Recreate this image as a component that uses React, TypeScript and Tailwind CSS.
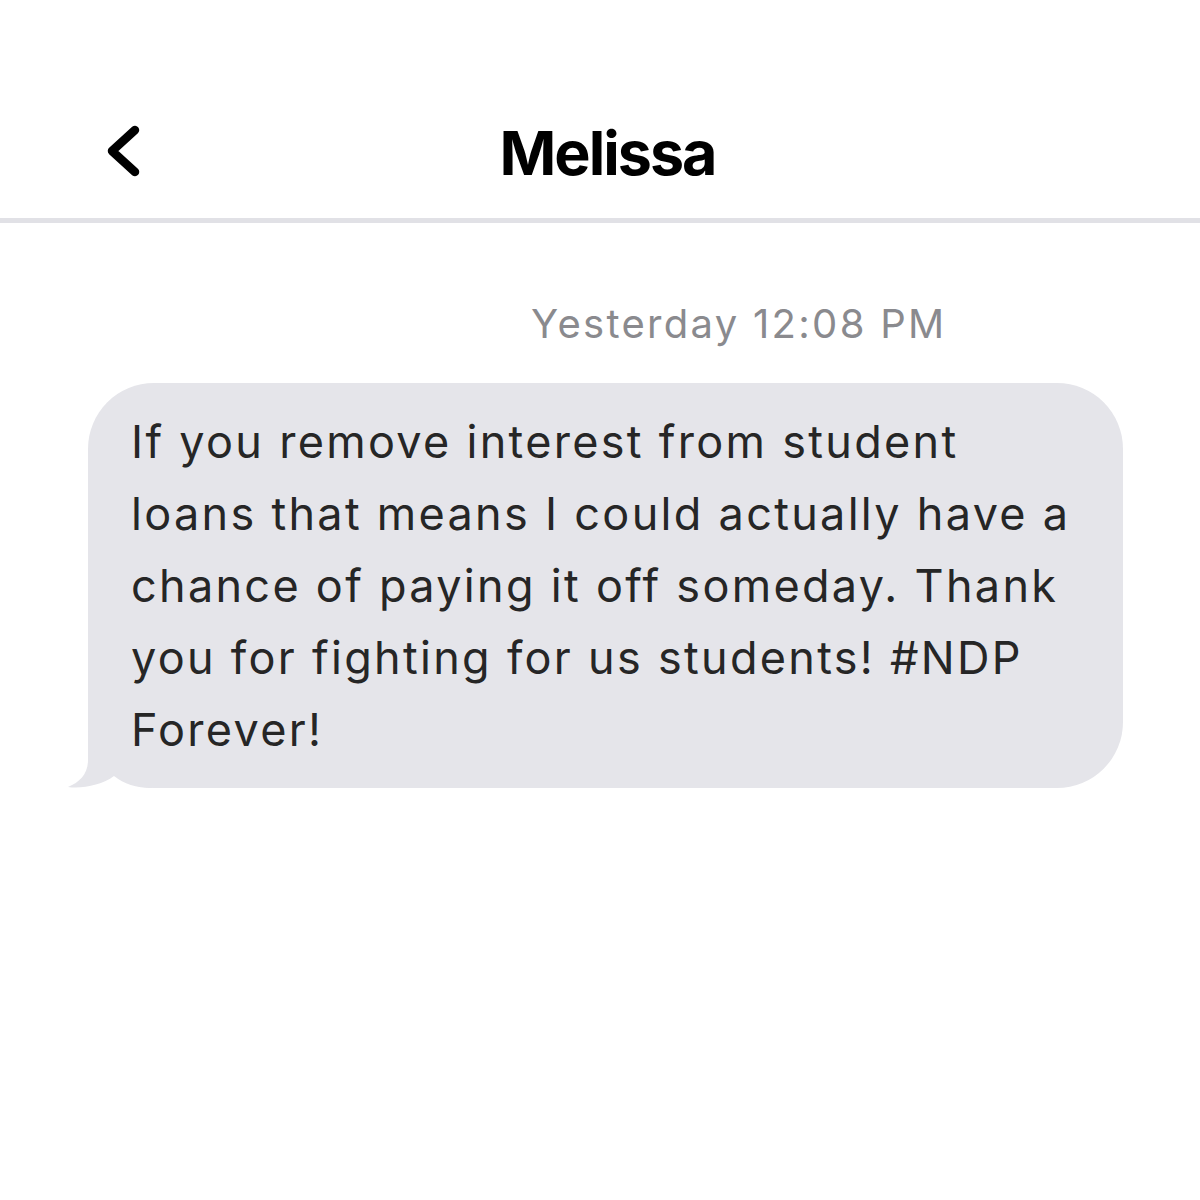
import React from "react";

export default function App() {
  const lines = [
    "If you remove interest from student",
    "loans that means I could actually have a",
    "chance of paying it off someday. Thank",
    "you for fighting for us students! #NDP",
    "Forever!",
  ];
  return (
    <div className="w-[1200px] h-[1200px] bg-white" style={{ fontFamily: "Inter, 'Noto Sans', sans-serif" }}>
      <div className="h-[218px] pt-[121px]">
        <div className="grid grid-cols-[1fr_auto_1fr] h-[60px]">
          <div className="pl-[102px]">
            <svg width="40" height="60" viewBox="0 0 40 60">
              <polyline points="33,9 10,30 33,51" fill="none" stroke="#000" strokeWidth="8.5" strokeLinecap="round" strokeLinejoin="round" />
            </svg>
          </div>
          <div className="ml-[15px] mt-[2px] text-[61px] leading-[60px] font-bold text-black tracking-[-2px]">Melissa</div>
          <div />
        </div>
      </div>
      <div className="h-[5px] bg-[#e1e1e6]" />
      <div className="pt-[77px] pl-[531px] text-[40px] leading-[48px] text-[#8a8a8e] tracking-[2.3px]">Yesterday 12:08 PM</div>
      <div className="mt-[35px] ml-[88px] w-[1035px] relative">
        <svg className="absolute left-[-22px] bottom-0" width="100" height="80" viewBox="0 0 100 80">
          <path d="M22 0 L22 52 C22 66 14 74 2 79 C16 81 36 77 48 68 C58 76 70 80 86 80 L86 0 Z" fill="#e5e5ea" />
        </svg>
        <div className="relative bg-[#e5e5ea] rounded-[66px] pl-[43px] pt-[23px] pb-[22px] text-[45px] leading-[72px] text-[#262626] tracking-[2.3px]">
          {lines.map((l, i) => (
            <div key={i} className="whitespace-nowrap">{l}</div>
          ))}
        </div>
      </div>
    </div>
  );
}
